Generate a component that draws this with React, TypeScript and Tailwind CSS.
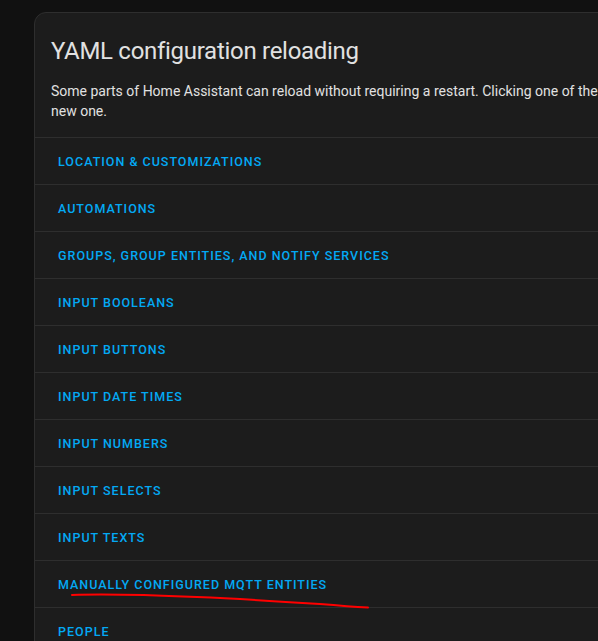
const items = [
  'Location & customizations',
  'Automations',
  'Groups, group entities, and notify services',
  'Input booleans',
  'Input buttons',
  'Input date times',
  'Input numbers',
  'Input selects',
  'Input texts',
  'Manually configured MQTT entities',
  'People',
  'Scenes',
];

export default function App() {
  return (
    <div
      className="relative h-[641px] w-[598px] overflow-hidden bg-[#111111] pl-[34px] pt-3"
      style={{ fontFamily: 'Roboto, "Noto Sans", sans-serif' }}
    >
      <div className="w-[1040px] rounded-xl border border-[#2e2e2e] bg-[#1c1c1c]">
        <div className="px-4 pb-4 pt-[22px]">
          <h1 className="text-[24px] font-normal leading-8 tracking-[-0.012em] text-[#e1e1e1]">
            YAML configuration reloading
          </h1>
          <p className="mt-[14px] whitespace-nowrap text-[14px] leading-5 text-[#e1e1e1]">
            Some parts of Home Assistant can reload without requiring a restart. Clicking one of the options below will unload their current YAML configuration and load the
            <br />
            new one.
          </p>
        </div>
        {items.map((item) => (
          <div key={item} className="flex h-[47px] items-center border-t border-[#2e2e2e] pl-[23px] pt-[2px]">
            <button className="text-[12.5px] font-medium uppercase tracking-[1px] text-[#03a9f4]">{item}</button>
          </div>
        ))}
      </div>
      <svg className="pointer-events-none absolute left-0 top-0" width="598" height="641" viewBox="0 0 598 641">
        <path
          d="M72 595 C 110 593.5, 150 595, 197 597 S 290 602, 320 604 S 350 607, 368 607.5"
          fill="none"
          stroke="#ff0000"
          strokeWidth="2"
          strokeLinecap="round"
        />
      </svg>
    </div>
  );
}
